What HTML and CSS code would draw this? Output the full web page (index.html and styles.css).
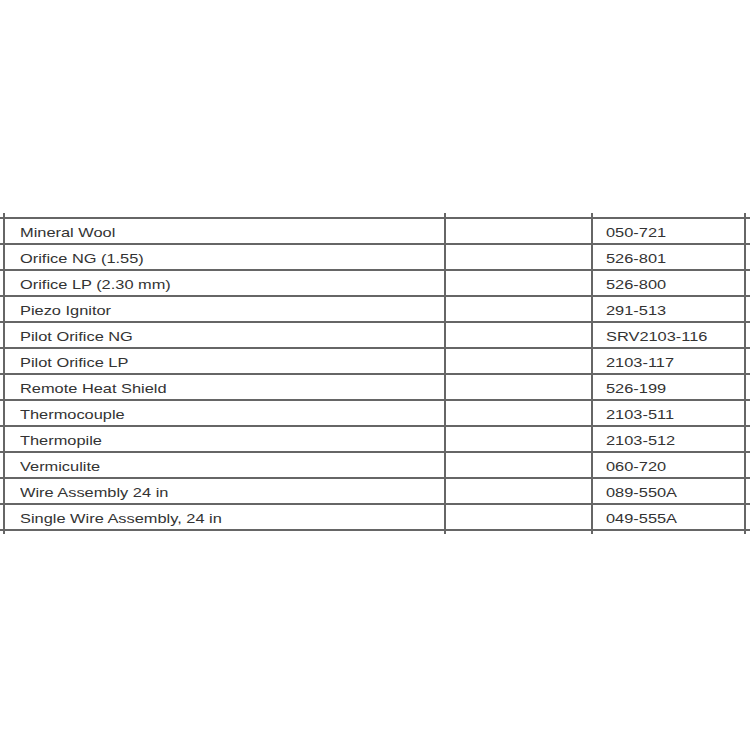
FILE: index.html
```html
<!DOCTYPE html>
<html>
<head>
<meta charset="utf-8">
<link rel="stylesheet" href="styles.css">
</head>
<body>
<div class="table">
  <div class="row"><div class="cell name"><span>Mineral Wool</span></div><div class="cell"></div><div class="cell code"><span>050-721</span></div><div class="cell"></div></div>
  <div class="row"><div class="cell name"><span>Orifice NG (1.55)</span></div><div class="cell"></div><div class="cell code"><span>526-801</span></div><div class="cell"></div></div>
  <div class="row"><div class="cell name"><span>Orifice LP (2.30 mm)</span></div><div class="cell"></div><div class="cell code"><span>526-800</span></div><div class="cell"></div></div>
  <div class="row"><div class="cell name"><span>Piezo Ignitor</span></div><div class="cell"></div><div class="cell code"><span>291-513</span></div><div class="cell"></div></div>
  <div class="row"><div class="cell name"><span>Pilot Orifice NG</span></div><div class="cell"></div><div class="cell code"><span>SRV2103-116</span></div><div class="cell"></div></div>
  <div class="row"><div class="cell name"><span>Pilot Orifice LP</span></div><div class="cell"></div><div class="cell code"><span>2103-117</span></div><div class="cell"></div></div>
  <div class="row"><div class="cell name"><span>Remote Heat Shield</span></div><div class="cell"></div><div class="cell code"><span>526-199</span></div><div class="cell"></div></div>
  <div class="row"><div class="cell name"><span>Thermocouple</span></div><div class="cell"></div><div class="cell code"><span>2103-511</span></div><div class="cell"></div></div>
  <div class="row"><div class="cell name"><span>Thermopile</span></div><div class="cell"></div><div class="cell code"><span>2103-512</span></div><div class="cell"></div></div>
  <div class="row"><div class="cell name"><span>Vermiculite</span></div><div class="cell"></div><div class="cell code"><span>060-720</span></div><div class="cell"></div></div>
  <div class="row"><div class="cell name"><span>Wire Assembly 24 in</span></div><div class="cell"></div><div class="cell code"><span>089-550A</span></div><div class="cell"></div></div>
  <div class="row last"><div class="cell name"><span>Single Wire Assembly, 24 in</span></div><div class="cell"></div><div class="cell code"><span>049-555A</span></div><div class="cell"></div></div>
</div>
</body>
</html>
```
FILE: styles.css
```css
html, body {
  margin: 0;
  padding: 0;
  background: #ffffff;
}
body {
  width: 750px;
  height: 750px;
  overflow: hidden;
  font-family: "Liberation Sans", Arial, sans-serif;
  color: #333333;
}
.table {
  margin-top: 213px;
  padding: 4px 0 3px;
  background:
    linear-gradient(#666, #666) 3px 0 / 2px 100% no-repeat,
    linear-gradient(#666, #666) 444px 0 / 2px 100% no-repeat,
    linear-gradient(#666, #666) 591px 0 / 2px 100% no-repeat,
    linear-gradient(#666, #666) 744px 0 / 2px 100% no-repeat;
}
.row {
  display: grid;
  grid-template-columns: 444px 147px 153px 1fr;
  height: 24px;
  border-top: 2px solid #666;
}
.row.last {
  border-bottom: 2px solid #666;
}
.cell {
  font-size: 13px;
  line-height: 21px;
  padding-top: 3px;
  white-space: nowrap;
}
.cell span {
  display: inline-block;
  transform: scaleX(1.26);
  transform-origin: left center;
}
.name {
  padding-left: 20px;
}
.code {
  padding-left: 15px;
}
```
